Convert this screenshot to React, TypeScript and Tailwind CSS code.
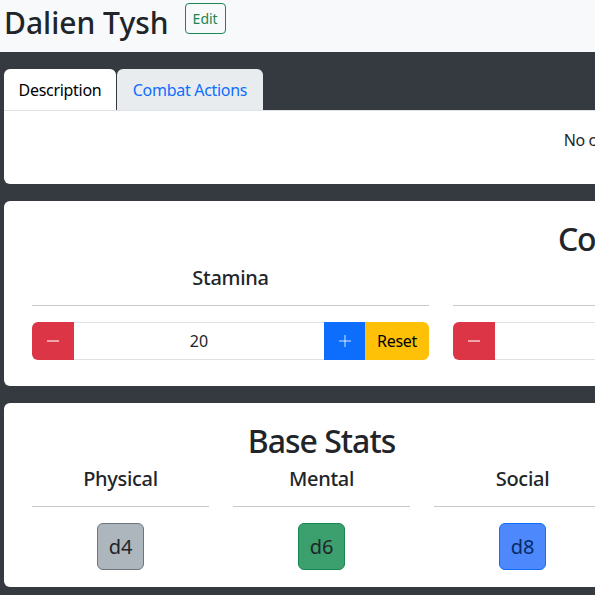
const stats = [
  { label: "Physical", die: "d4", box: "bg-[#adb5bd] border-[#6c757d] text-[#212529]" },
  { label: "Mental", die: "d6", box: "bg-[#3ba06d] border-[#198754] text-[#212529]" },
  { label: "Social", die: "d8", box: "bg-[#4d88fd] border-[#0d6efd] text-[#052c65]" },
];

const counters = [
  { label: "Stamina", value: 20 },
  { label: "Wounds", value: 0 },
  { label: "Fate", value: 3 },
];

function Minus() {
  return (
    <svg width="14" height="14" viewBox="0 0 14 14">
      <line x1="1" y1="7" x2="13" y2="7" stroke="rgba(255,255,255,0.55)" strokeWidth="2" />
    </svg>
  );
}

function Plus() {
  return (
    <svg width="14" height="14" viewBox="0 0 14 14">
      <line x1="1" y1="7" x2="13" y2="7" stroke="rgba(255,255,255,0.55)" strokeWidth="1.5" />
      <line x1="7" y1="1" x2="7" y2="13" stroke="rgba(255,255,255,0.55)" strokeWidth="1.5" />
    </svg>
  );
}

export default function App() {
  return (
    <div className="h-[595px] w-[595px] overflow-hidden bg-[#343a40] font-['Noto_Sans',sans-serif] text-[#212529]">
      <div className="w-[1303px]">
        {/* Header */}
        <header className="flex h-[52px] items-start bg-[#f8f9fa] pl-1">
          <h1 className="mt-[5px] text-[30px] font-medium leading-[36px]">Dalien Tysh</h1>
          <button className="ml-[16px] mt-[3px] h-[31px] w-[41px] rounded-[4px] border border-[#198754] text-[14px] text-[#198754]">
            Edit
          </button>
        </header>

        <main className="flex flex-col gap-[17px] px-1 pt-[17px]">
          {/* Tabs */}
          <section>
            <div className="flex items-end">
              <div className="flex h-[41px] w-[112px] items-center justify-center rounded-t-[6px] bg-white text-[16px] tracking-[-0.3px] text-black">
                Description
              </div>
              <div className="ml-px flex h-[41px] w-[146px] items-center justify-center rounded-t-[6px] bg-[#e9ecef] text-[16px] tracking-[-0.3px] text-[#0d6efd]">
                Combat Actions
              </div>
            </div>
            <div className="rounded-b-[6px] border-t border-[#dee2e6] bg-white pb-[32px] pt-[17px] text-center text-[16px] leading-[24px] tracking-[-0.4px]">
              No character description
            </div>
          </section>

          {/* Combat stats */}
          <section className="rounded-[6px] bg-white px-[28px] pb-[26px] pt-[18px]">
            <h2 className="text-center text-[32px] font-medium leading-[39px] tracking-[-1.5px]">Combat Stats</h2>
            <div className="mt-2 grid grid-cols-3 gap-6">
              {counters.map((c) => (
                <div key={c.label}>
                  <h3 className="text-center text-[20px] font-medium leading-[24px] tracking-[-0.3px]">{c.label}</h3>
                  <hr className="mt-[15px] border-[#c8c9ca]" />
                  <div className="mt-4 flex h-[38px]">
                    <button className="flex w-[42px] items-center justify-center rounded-l-[6px] bg-[#dc3545]">
                      <Minus />
                    </button>
                    <div className="flex flex-1 items-center justify-center border-y border-[#dee2e6] text-[16px]">
                      {c.value}
                    </div>
                    <button className="flex w-[41px] items-center justify-center bg-[#0d6efd]">
                      <Plus />
                    </button>
                    <button className="w-[64px] rounded-r-[6px] bg-[#ffc107] text-[16px] tracking-[-0.3px] text-black">
                      Reset
                    </button>
                  </div>
                </div>
              ))}
            </div>
          </section>

          {/* Base stats */}
          <section className="w-[635px] rounded-[6px] bg-white px-[28px] pb-[17px] pt-[19px]">
            <h2 className="text-center text-[32px] font-medium leading-[38px] tracking-[-1px]">Base Stats</h2>
            <div className="mt-[7px] grid grid-cols-3 gap-6">
              {stats.map((s) => (
                <div key={s.label} className="flex flex-col items-center">
                  <h3 className="text-[20px] font-medium leading-[24px] tracking-[-0.3px]">{s.label}</h3>
                  <hr className="mt-[15px] w-full border-[#c8c9ca]" />
                  <div
                    className={`mt-4 flex h-[47px] w-[47px] items-center justify-center rounded-[6px] border text-[20px] ${s.box}`}
                  >
                    {s.die}
                  </div>
                </div>
              ))}
            </div>
          </section>
        </main>
      </div>
    </div>
  );
}
